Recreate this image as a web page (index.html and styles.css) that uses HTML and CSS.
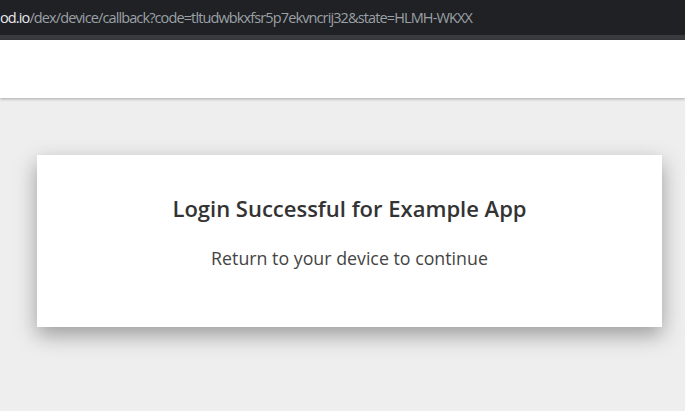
FILE: index.html
```html
<!DOCTYPE html>
<html>
<head>
<meta charset="utf-8">
<link rel="stylesheet" href="styles.css">
</head>
<body>
<div class="urlbar"><span class="host">od.io</span><span class="path">/dex/device/callback?code=tltudwbkxfsr5p7ekvncrij32&amp;state=HLMH-WKXX</span></div>
<div class="strip"></div>
<header class="topbar"></header>
<main class="content">
  <section class="card">
    <h2 class="title">Login Successful for Example App</h2>
    <p class="subtitle">Return to your device to continue</p>
  </section>
</main>
</body>
</html>
```
FILE: styles.css
```css
html, body {
  margin: 0;
  padding: 0;
  height: 100%;
  overflow: hidden;
}
body {
  background: #eeeeee;
  font-family: "Open Sans", "Noto Sans", sans-serif;
}
.urlbar {
  height: 35px;
  background: #202124;
  color: #9aa0a6;
  font-family: "Open Sans", sans-serif;
  font-size: 14.5px;
  line-height: 35px;
  white-space: nowrap;
  overflow: hidden;
  letter-spacing: -0.88px;
}
.host { color: #e8eaed; }
.strip {
  height: 5px;
  background: #3a3b3f;
}
.topbar {
  height: 58px;
  background: #ffffff;
  box-shadow: 0 1px 3px rgba(0,0,0,0.3);
  position: relative;
}
.content {
  padding: 57px 23px 0 37px;
}
.card {
  width: 625px;
  height: 172px;
  box-sizing: border-box;
  background: #fff;
  box-shadow: 0 8px 20px rgba(0,0,0,0.35);
  text-align: center;
  padding-top: 38px;
}
.title {
  margin: 0;
  font-size: 22px;
  font-weight: 600;
  color: #333;
  line-height: 30px;
}
.subtitle {
  margin: 22px 0 0;
  font-size: 17.8px;
  color: #444;
  line-height: 26px;
}
```
